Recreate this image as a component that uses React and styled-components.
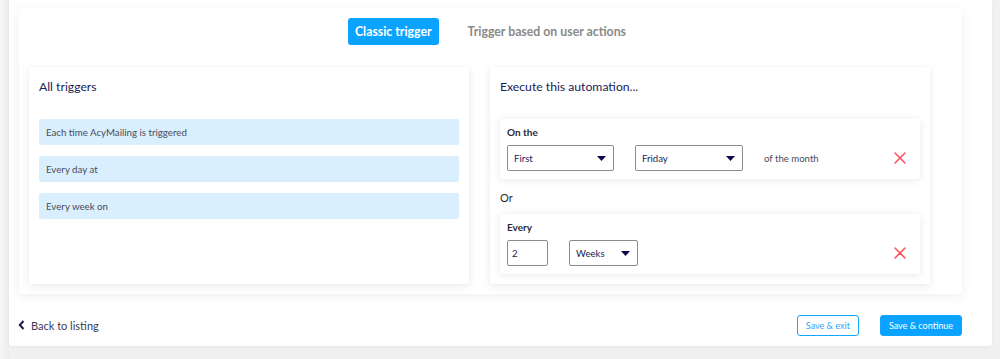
import React from 'react';
import styled, { createGlobalStyle } from 'styled-components';

const GlobalStyle = createGlobalStyle`
  html, body {
    margin: 0;
    padding: 0;
    background: #f0f0f0;
    font-family: Lato, "Open Sans", sans-serif;
  }
`;

const triggers = ['Each time AcyMailing is triggered', 'Every day at', 'Every week on'];

const Caret = () => (
  <svg width="9" height="5" viewBox="0 0 9 5">
    <path d="M0 0 L9 0 L4.5 5 Z" fill="#0a0a4a" />
  </svg>
);

const Cross = () => (
  <svg width="12" height="12" viewBox="0 0 12 12">
    <path d="M1 1 L11 11 M11 1 L1 11" stroke="#ff4d58" strokeWidth="1.5" strokeLinecap="round" />
  </svg>
);

const Chevron = () => (
  <svg width="7" height="10" viewBox="0 0 7 10">
    <path d="M5.5 1 L1.8 5 L5.5 9" stroke="#1c1c4c" strokeWidth="2" fill="none" />
  </svg>
);

const App = () => {
  return (
    <>
      <GlobalStyle />
      <Page>
        <Container>
          <Card>
            <Tabs>
              <Tab active>Classic trigger</Tab>
              <Tab>Trigger based on user actions</Tab>
            </Tabs>
            <Panels>
              <Panel>
                <PanelTitle>All triggers</PanelTitle>
                <TriggerList>
                  {triggers.map((t) => (
                    <TriggerItem key={t}>{t}</TriggerItem>
                  ))}
                </TriggerList>
              </Panel>
              <Panel>
                <PanelTitle>Execute this automation...</PanelTitle>
                <RuleList>
                  <Rule>
                    <RuleLabel>On the</RuleLabel>
                    <RuleRow>
                      <Select width={107}>
                        First <Caret />
                      </Select>
                      <Select width={108}>
                        Friday <Caret />
                      </Select>
                      <RuleText>of the month</RuleText>
                      <Remove>
                        <Cross />
                      </Remove>
                    </RuleRow>
                  </Rule>
                  <OrText>Or</OrText>
                  <Rule>
                    <RuleLabel>Every</RuleLabel>
                    <RuleRow>
                      <NumberInput>2</NumberInput>
                      <Select width={69}>
                        Weeks <Caret />
                      </Select>
                      <Remove>
                        <Cross />
                      </Remove>
                    </RuleRow>
                  </Rule>
                </RuleList>
              </Panel>
            </Panels>
          </Card>
          <Footer>
            <BackLink>
              <Chevron />
              Back to listing
            </BackLink>
            <Actions>
              <Button outline>Save &amp; exit</Button>
              <Button>Save &amp; continue</Button>
            </Actions>
          </Footer>
        </Container>
      </Page>
    </>
  );
};

export default App;

const Page = styled.div`
  display: flex;
  height: 359px;
  padding-left: 9px;
  padding-right: 8px;
  box-sizing: border-box;
  background: linear-gradient(to right, #f7f7f7 0, #ececec 9px, #f0f0f0 9px);
`;

const Container = styled.div`
  width: 983px;
  height: 346px;
  background: #ffffff;
  border-radius: 0 0 3px 3px;
  padding: 8px 30px 0 10px;
  box-sizing: border-box;
  box-shadow: 0 1px 3px rgba(0, 0, 0, 0.04);
`;

const Card = styled.div`
  height: 286px;
  box-sizing: border-box;
  padding: 10px;
  background: #ffffff;
  border-radius: 3px;
  box-shadow: 0 2px 12px rgba(0, 0, 0, 0.07);
  display: flex;
  flex-direction: column;
`;

const Tabs = styled.div`
  display: flex;
  justify-content: center;
  gap: 29px;
  height: 27px;
  margin-bottom: 22px;
`;

const Tab = styled.div`
  display: flex;
  align-items: center;
  padding: 0 7px;
  border-radius: 3px;
  font-size: 12.3px;
  font-weight: 700;
  color: ${(p) => (p.active ? '#ffffff' : '#8a8a8a')};
  background: ${(p) => (p.active ? '#0aa3ff' : 'transparent')};
  margin-left: ${(p) => (p.active ? '0' : '-7px')};
`;

const Panels = styled.div`
  display: flex;
  gap: 21px;
  flex: 1;
`;

const Panel = styled.div`
  width: 440px;
  box-sizing: border-box;
  padding: 12px 10px 10px 10px;
  background: #ffffff;
  border-radius: 3px;
  box-shadow: 0 2px 10px rgba(0, 0, 0, 0.09);
`;

const PanelTitle = styled.div`
  font-size: 12.2px;
  color: #1b1b55;
  line-height: 16px;
  margin-bottom: 24px;
`;

const TriggerList = styled.div`
  display: flex;
  flex-direction: column;
  gap: 11px;
`;

const TriggerItem = styled.div`
  height: 26px;
  display: flex;
  align-items: center;
  padding-left: 7px;
  background: #d9effd;
  border-radius: 2px;
  font-size: 9.7px;
  color: #4a4a5a;
`;

const RuleList = styled.div`
  display: flex;
  flex-direction: column;
`;

const Rule = styled.div`
  padding: 6px 7px 8px 7px;
  background: #ffffff;
  border-radius: 3px;
  box-shadow: 0 1px 8px rgba(0, 0, 0, 0.09);
`;

const RuleLabel = styled.div`
  font-size: 10px;
  font-weight: 700;
  color: #2a2a3a;
  line-height: 14px;
  margin-bottom: 6px;
`;

const RuleRow = styled.div`
  display: flex;
  align-items: center;
  gap: 21px;
`;

const Select = styled.div`
  width: ${(p) => p.width}px;
  height: 26px;
  box-sizing: border-box;
  display: flex;
  align-items: center;
  justify-content: space-between;
  padding: 0 7px 0 6px;
  border: 1px solid #8c8c8c;
  border-radius: 2px;
  font-size: 9.6px;
  color: #1b1b55;
`;

const NumberInput = styled.div`
  width: 41px;
  height: 26px;
  box-sizing: border-box;
  display: flex;
  align-items: center;
  padding-left: 4px;
  border: 1px solid #8c8c8c;
  border-radius: 2px;
  font-size: 9.6px;
  color: #1b1b55;
`;

const RuleText = styled.div`
  font-size: 9.6px;
  color: #4a4a5a;
`;

const Remove = styled.div`
  margin-left: auto;
  margin-right: 7px;
  display: flex;
`;

const OrText = styled.div`
  font-size: 11px;
  color: #2a2a3a;
  line-height: 14px;
  padding: 12px 0 9px 0;
`;

const Footer = styled.div`
  height: 52px;
  display: flex;
  align-items: center;
  justify-content: space-between;
  padding-top: 10px;
  box-sizing: border-box;
`;

const BackLink = styled.div`
  display: flex;
  align-items: center;
  gap: 6px;
  font-size: 11px;
  color: #3a3a55;
  margin-left: -1px;
`;

const Actions = styled.div`
  display: flex;
  gap: 21px;
`;

const Button = styled.div`
  height: 21px;
  box-sizing: border-box;
  display: flex;
  align-items: center;
  padding: 0 8px;
  border-radius: 3px;
  font-size: 9px;
  border: 1px solid #14a6ff;
  color: ${(p) => (p.outline ? '#2aa7ff' : '#ffffff')};
  background: ${(p) => (p.outline ? '#ffffff' : '#0aa3ff')};
`;
